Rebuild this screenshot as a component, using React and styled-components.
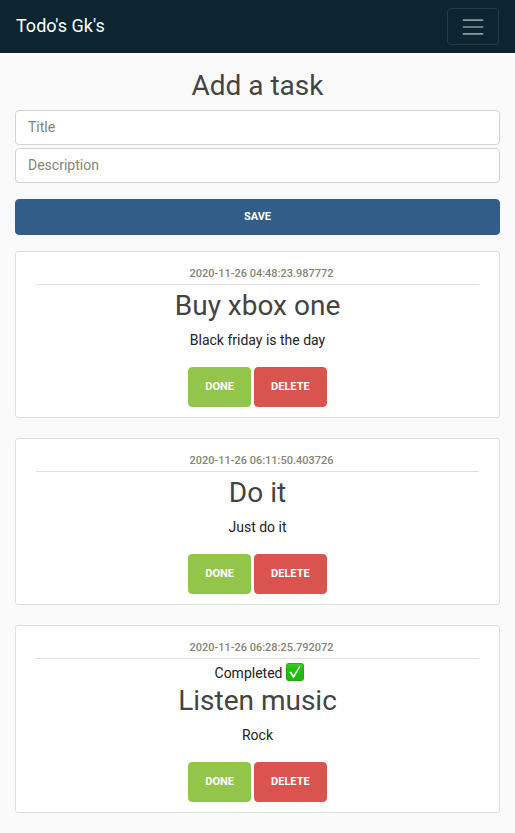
import React from "react";
import styled, { createGlobalStyle } from "styled-components";

const GlobalStyle = createGlobalStyle`
  *, *::before, *::after { box-sizing: border-box; }
  body {
    margin: 0;
    background: #fafafa;
    color: #222;
    font-family: Roboto, "Liberation Sans", sans-serif;
    font-size: 14px;
    line-height: 21px;
  }
`;

const Navbar = styled.nav`
  display: flex;
  align-items: center;
  justify-content: space-between;
  padding: 8px 16px;
  background: #0c2531;
`;

const Brand = styled.a`
  padding-bottom: 2px;
  color: #fff;
  font-size: 18px;
  line-height: 26px;
  text-decoration: none;
`;

const Toggler = styled.button`
  display: flex;
  align-items: center;
  justify-content: center;
  width: 52px;
  height: 37px;
  padding: 0;
  background: transparent;
  border: 1px solid #243b46;
  border-radius: 4px;
`;

const Container = styled.main`
  padding: 16px 15px;
`;

const Heading = styled.h2`
  margin: 0 0 8px;
  color: #444;
  font-size: 28px;
  font-weight: 400;
  line-height: 33px;
  text-align: center;
`;

const TaskForm = styled.form`
  display: flex;
  flex-direction: column;
  gap: 3px;
  margin-bottom: 16px;
`;

const Field = styled.input`
  width: 100%;
  padding: 6px 12px 7px;
  background: #fff;
  border: 1px solid #ced4da;
  border-radius: 4px;
  color: #495057;
  font: inherit;
  line-height: 20px;
  &::placeholder { color: #868477; opacity: 1; }
`;

const Button = styled.button`
  padding: 12px 16px;
  border: 1px solid ${(p) => p.$color};
  border-radius: 4px;
  background: ${(p) => p.$color};
  color: #fff;
  font-family: inherit;
  font-size: 11px;
  font-weight: 700;
  line-height: 14px;
  text-transform: uppercase;
`;

const SaveButton = styled(Button)`
  margin-top: 13px;
  padding: 10px 16px;
`;

const TaskList = styled.section`
  display: flex;
  flex-direction: column;
  gap: 20px;
`;

const Card = styled.article`
  padding: 13px 20px 10px;
  background: #fff;
  border: 1px solid #dfdfdf;
  border-radius: 3px;
  text-align: center;
`;

const Stamp = styled.time`
  display: block;
  margin-bottom: 4px;
  padding: 0 0 1px 8px;
  border-bottom: 1px solid #dfdfdf;
  color: #868477;
  font-size: 11px;
  font-weight: 500;
  line-height: 18px;
`;

const Status = styled.p`
  display: flex;
  align-items: flex-start;
  justify-content: center;
  gap: 4px;
  margin: 0;
  padding-left: 4px;
`;

const Description = styled.p`
  margin: 0 0 16px;
`;

const Actions = styled.div`
  display: flex;
  justify-content: center;
  gap: 3px;
`;

const tasks = [
  { time: "2020-11-26 04:48:23.987772", title: "Buy xbox one", text: "Black friday is the day" },
  { time: "2020-11-26 06:11:50.403726", title: "Do it", text: "Just do it" },
  { time: "2020-11-26 06:28:25.792072", title: "Listen music", text: "Rock", completed: true },
];

function MenuIcon() {
  return (
    <svg width="26" height="26" viewBox="0 0 30 30" fill="none" stroke="#8b989f" strokeWidth="2" strokeLinecap="round" aria-hidden="true">
      <path d="M4 7h22M4 15h22M4 23h22" />
    </svg>
  );
}

function CheckIcon() {
  return (
    <svg width="18" height="18" viewBox="0 0 18 18" role="img" aria-label="done">
      <defs>
        <linearGradient id="check-fill" x1="0" y1="0" x2="0" y2="1">
          <stop offset="0" stopColor="#3ccb2c" />
          <stop offset="0.3" stopColor="#1fc40c" />
          <stop offset="1" stopColor="#1bb80a" />
        </linearGradient>
      </defs>
      <rect width="18" height="18" rx="3" fill="#2a9e20" />
      <rect x="0.7" y="0.7" width="16.6" height="16.6" rx="2.5" fill="url(#check-fill)" />
      <path d="M3.5 9.2L5 8.4L7.5 12.2L13.2 3.2L14.6 3.4L8 14.8L7 14.8Z" fill="#fff" />
    </svg>
  );
}

function Task({ task }) {
  return (
    <Card>
      <Stamp>{task.time}</Stamp>
      {task.completed && <Status>Completed <CheckIcon /></Status>}
      <Heading>{task.title}</Heading>
      <Description>{task.text}</Description>
      <Actions>
        <Button type="button" $color="#93c54b">Done</Button>
        <Button type="button" $color="#d9534f">Delete</Button>
      </Actions>
    </Card>
  );
}

export default function App() {
  return (
    <>
      <GlobalStyle />
      <Navbar>
        <Brand href="#">Todo's Gk's</Brand>
        <Toggler type="button" aria-label="Toggle navigation"><MenuIcon /></Toggler>
      </Navbar>
      <Container>
        <Heading>Add a task</Heading>
        <TaskForm onSubmit={(e) => e.preventDefault()}>
          <Field placeholder="Title" aria-label="Title" />
          <Field placeholder="Description" aria-label="Description" />
          <SaveButton $color="#325d88">Save</SaveButton>
        </TaskForm>
        <TaskList>
          {tasks.map((t) => <Task key={t.time} task={t} />)}
        </TaskList>
      </Container>
    </>
  );
}
